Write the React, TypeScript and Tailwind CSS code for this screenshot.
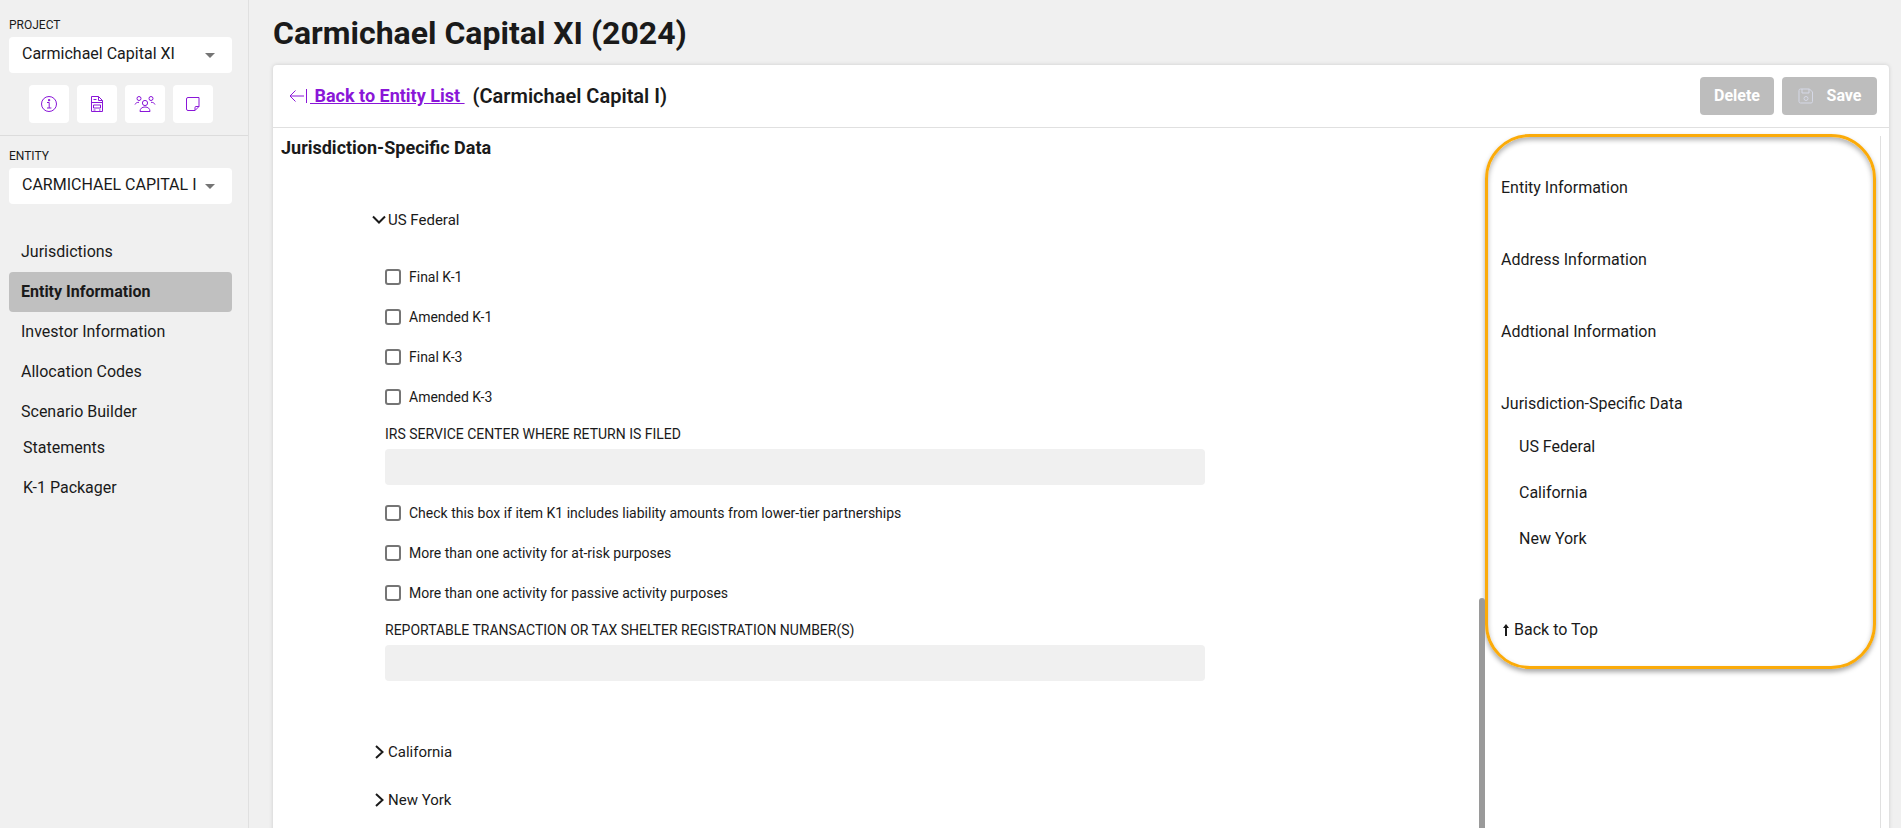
const purple = "#8a16d8";

const navTop = ["Jurisdictions", "Entity Information", "Investor Information", "Allocation Codes", "Scenario Builder"];

function InfoIcon() {
  return (
    <svg width="18" height="18" viewBox="0 0 18 18" fill="none" stroke={purple} strokeWidth="1">
      <circle cx="9" cy="9" r="7.5" />
      <path d="M7 7.5h2.2V13M7 13h4.400" />
      <path d="M8.500 4.600h1.200v1.200H8.500z" fill={purple} />
    </svg>
  );
}

function FileIcon() {
  return (
    <svg width="14" height="18" viewBox="0 0 14 18" fill="none" stroke={purple} strokeWidth="1">
      <path d="M1.500 1.500h7l4 4v11h-11z" />
      <path d="M8.500 1.500v4h4M3.500 4.500h3M1.500 7.500h11M3.500 10h7v3h-7zM3.500 15h2M9 15h1.500" />
    </svg>
  );
}

function UsersIcon() {
  return (
    <svg width="22" height="18" viewBox="0 0 22 18" fill="none" stroke={purple} strokeWidth="1">
      <circle cx="5" cy="3.500" r="2" />
      <circle cx="17" cy="3.500" r="2" />
      <circle cx="11" cy="8" r="2.600" />
      <path d="M1 9.500c.6-1.500 2-2.200 4-2.200M21 9.500c-.6-1.500-2-2.200-4-2.200M6 16.500c0-3 2-4.500 5-4.500s5 1.500 5 4.500z" />
    </svg>
  );
}

function NoteIcon() {
  return (
    <svg width="16" height="16" viewBox="0 0 16 16" fill="none" stroke={purple} strokeWidth="1">
      <path d="M3 1.500h11v9l-4 4H3a1.500 1.500 0 0 1-1.500-1.500V3A1.500 1.500 0 0 1 3 1.500z" />
      <path d="M14 10.500h-3a1 1 0 0 0-1 1v3" />
    </svg>
  );
}

function SelectBox({ label }: { label: string }) {
  return (
    <div className="flex h-9 w-[223px] items-center justify-between rounded bg-white pl-[13px] pr-[17px] text-base text-[#1a1a1a]">
      <span className="w-[174px] overflow-hidden whitespace-nowrap pb-[2px]">{label}</span>
      <span className="h-0 w-0 border-x-[5px] border-t-[5px] border-x-transparent border-t-[#757575]" />
    </div>
  );
}

function Check({ label }: { label: string }) {
  return (
    <label className="flex h-10 items-center gap-2 text-sm text-[#1a1a1a]">
      <span className="h-4 w-4 rounded-[3px] border-2 border-[#757575] bg-white" />
      {label}
    </label>
  );
}

function Field({ label }: { label: string }) {
  return (
    <div className="mt-[7px] mb-2">
      <div className="text-sm leading-5 text-[#1a1a1a]">{label}</div>
      <div className="mt-[5px] h-9 w-[820px] rounded bg-[#f0f0f0]" />
    </div>
  );
}

function ChevronRow({ open, label, className }: { open?: boolean; label: string; className: string }) {
  return (
    <div className={`flex h-7 items-center text-[15px] ${className}`}>
      <svg width="16" height="16" viewBox="0 0 16 16" fill="none" stroke="#1a1a1a" strokeWidth="2">
        <path d={open ? "M1 4.500l6 6 6-6" : "M4 2l6.500 6L4 14"} />
      </svg>
      {label}
    </div>
  );
}

export default function App() {
  return (
    <div className="flex h-[828px] overflow-hidden bg-[#f0f0f0] font-['Roboto',sans-serif] text-[#1a1a1a]">
      <aside className="w-[249px] shrink-0 border-r border-[#e0e0e0]">
        <div className="px-[9px] pt-[17px]">
          <div className="text-xs leading-[16px]">PROJECT</div>
          <div className="mt-1">
            <SelectBox label="Carmichael Capital XI" />
          </div>
          <div className="mt-3 flex gap-2 pl-5">
            {[<InfoIcon />, <FileIcon />, <UsersIcon />, <NoteIcon />].map((icon, i) => (
              <div key={i} className="flex h-[38px] w-10 items-center justify-center rounded bg-white">
                {icon}
              </div>
            ))}
          </div>
        </div>
        <div className="mt-3 border-t border-[#dcdcdc] px-[9px] pt-3">
          <div className="text-xs leading-[16px]">ENTITY</div>
          <div className="mt-1">
            <SelectBox label="CARMICHAEL CAPITAL I" />
          </div>
        </div>
        <nav className="mt-7 px-[9px] text-base">
          {navTop.map((n) => (
            <div
              key={n}
              className={`flex h-10 w-[223px] items-center rounded pl-3 ${n === "Entity Information" ? "bg-[#c0c0c0] font-bold" : ""}`}
            >
              {n}
            </div>
          ))}
          <div className="flex h-8 items-center pl-[14px]">Statements</div>
          <div className="flex h-12 items-center pl-[14px]">K-1 Packager</div>
        </nav>
      </aside>

      <main className="min-w-0 flex-1 pl-6 pr-3">
        <h1 className="flex h-[65px] items-center text-[32px] font-bold text-[#1a1a1a]">Carmichael Capital XI (2024)</h1>
        <div className="h-[800px] rounded-t bg-white shadow-[0_0_4px_rgba(0,0,0,0.15)]">
          <header className="flex h-[63px] items-center justify-between border-b border-[#e0e0e0] pl-4 pr-3">
            <div className="flex items-center text-lg font-bold">
              <svg width="18" height="14" viewBox="0 0 18 14" fill="none" stroke={purple} strokeWidth="1" className="mr-[3px]">
                <path d="M1 7h14M6.500 1.500 1 7l5.500 5.500M17.500 0v14" />
              </svg>
              <a className="whitespace-pre text-[#8a16d8] underline"> Back to Entity List </a>
              <span className="ml-2 text-xl font-semibold">(Carmichael Capital I)</span>
            </div>
            <div className="flex gap-2">
              <button className="h-[38px] w-[74px] rounded bg-[#bdbdbd] text-base font-bold text-white">Delete</button>
              <button className="flex h-[38px] w-[95px] items-center justify-center gap-[13px] rounded bg-[#bdbdbd] text-base font-bold text-white">
                <svg width="16" height="16" viewBox="0 0 16 16" fill="none" stroke="#d5d8e6" strokeWidth="1">
                  <path d="M2.500 1h9l3 3v9.500a1.500 1.500 0 0 1-1.500 1.500H2.500A1.500 1.500 0 0 1 1 13.500v-11A1.500 1.500 0 0 1 2.500 1z" />
                  <path d="M4 1v4h7V1" />
                  <circle cx="8" cy="10.500" r="2" />
                </svg>
                Save
              </button>
            </div>
          </header>
          <div className="flex h-[700px]">
            <section className="relative min-w-0 flex-1 pl-2 pt-[5px]">
              <h2 className="text-lg leading-[30px] font-bold">Jurisdiction-Specific Data</h2>
              <div className="pl-[91px] pt-[43px]">
                <ChevronRow open label="US Federal" className="" />
                <div className="pl-[13px] pt-[23px]">
                  <Check label="Final K-1" />
                  <Check label="Amended K-1" />
                  <Check label="Final K-3" />
                  <Check label="Amended K-3" />
                  <Field label="IRS SERVICE CENTER WHERE RETURN IS FILED" />
                  <Check label="Check this box if item K1 includes liability amounts from lower-tier partnerships" />
                  <Check label="More than one activity for at-risk purposes" />
                  <Check label="More than one activity for passive activity purposes" />
                  <Field label="REPORTABLE TRANSACTION OR TAX SHELTER REGISTRATION NUMBER(S)" />
                </div>
                <ChevronRow label="California" className="mt-[57px]" />
                <ChevronRow label="New York" className="mt-5" />
              </div>
              <div className="absolute right-0 top-[470px] h-[300px] w-[6px] rounded-t bg-[#9a9a9a]" />
            </section>
            <div className="mr-2 flex shrink-0">
              <div className="mt-[6px] h-[535px] w-[391px] rounded-[45px] border-[3px] border-[#fbab0a] px-[13px] text-base shadow-[0_3px_5px_rgba(0,0,0,0.35),inset_0_3px_5px_rgba(0,0,0,0.3)]">
                <div className="mt-[39px] leading-6">Entity Information</div>
                <div className="mt-12 leading-6">Address Information</div>
                <div className="mt-12 leading-6">Addtional Information</div>
                <div className="mt-12 leading-6">Jurisdiction-Specific Data</div>
                <div className="pl-[18px]">
                  <div className="mt-[19px] leading-6">US Federal</div>
                  <div className="mt-[22px] leading-6">California</div>
                  <div className="mt-[22px] leading-6">New York</div>
                </div>
                <div className="mt-[67px] flex items-center leading-6">
                  <svg width="6" height="12" viewBox="0 0 6 12" fill="#1a1a1a" className="ml-[2px] mr-[5px]">
                    <path d="M3 0l3 4H4v8H2V4H0z" />
                  </svg>
                  Back to Top
                </div>
              </div>
              <div className="ml-1 mt-2 w-px bg-[#e0e0e0]" />
            </div>
          </div>
        </div>
      </main>
    </div>
  );
}
